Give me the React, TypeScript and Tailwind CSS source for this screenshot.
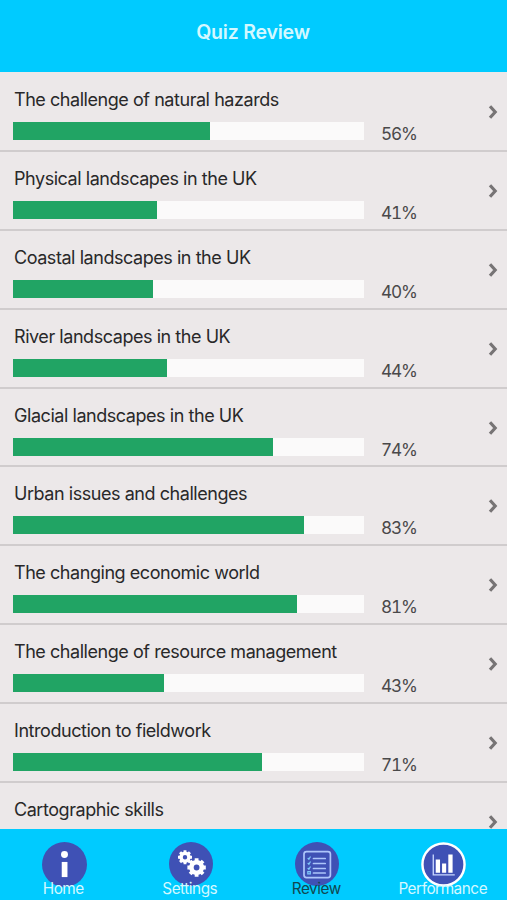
import type { ReactNode } from 'react';

interface Topic {
  title: string;
  score?: number;
}

const topics: Topic[] = [
  { title: 'The challenge of natural hazards', score: 56 },
  { title: 'Physical landscapes in the UK', score: 41 },
  { title: 'Coastal landscapes in the UK', score: 40 },
  { title: 'River landscapes in the UK', score: 44 },
  { title: 'Glacial landscapes in the UK', score: 74 },
  { title: 'Urban issues and challenges', score: 83 },
  { title: 'The changing economic world', score: 81 },
  { title: 'The challenge of resource management', score: 43 },
  { title: 'Introduction to fieldwork', score: 71 },
  { title: 'Cartographic skills' },
];

const InfoIcon = () => (
  <svg viewBox="0 0 44 44" className="size-[45px]">
    <circle cx="22" cy="22" r="22" fill="#3f51b5" />
    <circle cx="22" cy="12.2" r="3.4" fill="#fff" />
    <path d="M19.3 19.5h5.6v14.8h-5.6z" fill="#fff" />
  </svg>
);

// A ring with eight short teeth around it
const Gear = ({ x, y, scale }: { x: number; y: number; scale: number }) => (
  <g transform={`translate(${x} ${y}) scale(${scale})`} stroke="#fff">
    <circle r="5.2" fill="none" strokeWidth="4.6" />
    {[0, 45, 90, 135].map((angle) => (
      <path key={angle} d="M0-9.2v3M0 6.2v3" strokeWidth="3.8" transform={`rotate(${angle})`} />
    ))}
  </g>
);

const GearsIcon = () => (
  <svg viewBox="0 0 44 44" className="size-[44px]">
    <circle cx="22" cy="22" r="22" fill="#3f51b5" />
    <Gear x={16} y={15.2} scale={0.76} />
    <Gear x={27.6} y={25.5} scale={1} />
  </svg>
);

const ListIcon = () => (
  <svg viewBox="0 0 44 44" className="size-[44px]">
    <circle cx="22" cy="22" r="22" fill="#3f51b5" />
    <rect x="9" y="9.6" width="26.4" height="26" rx="2.5" fill="none" stroke="#adc5fa" strokeWidth="1.7" />
    <path d="M18.5 16.5h11.7M18.5 21.5h11.7M18.5 26.5h11.7M18.5 31h11.7" stroke="#adc5fa" strokeWidth="1.7" strokeLinecap="round" />
    <path d="m12.7 16 1.2 1.2 1.6-2.7M12.7 21l1.2 1.2 1.6-2.7M12.7 26l1.2 1.2 1.6-2.7M12.8 29.7h2.5v2.2h-2.5z" fill="none" stroke="#7fc8fa" strokeWidth="1.2" />
  </svg>
);

const ChartIcon = () => (
  <svg viewBox="0 0 44 44" className="size-[45px]">
    <circle cx="22" cy="22" r="20.6" fill="#3f51b5" stroke="#fff" strokeWidth="2.4" />
    <path d="M12 12.2v20h21" fill="none" stroke="#c9d7ff" strokeWidth="1.3" />
    <path d="M14.4 17h4.2v13h-4.2zM20.6 21h4v9h-4zM26.7 12.3h4.2V30h-4.2z" fill="#fff" />
  </svg>
);

const TopicRow = ({ title, score }: Topic) => (
  <li className="relative h-[78.9px] shrink-0 border-b-2 border-[#d0cccd] pl-[13px] pt-[16px]">
    <h2 className="pl-px text-[18px] leading-[22px] tracking-[-0.45px] text-[#292829]">{title}</h2>
    {score !== undefined && (
      <div className="mt-[11px] flex">
        <div className="h-[18px] w-[351px] bg-[#fbfafa]">
          <div className="h-full bg-[#21a464]" style={{ width: `${score}%` }} />
        </div>
        <span className="ml-[17px] mt-[2px] text-[17.2px] leading-[20px] tabular-nums tracking-[-1.2px] text-[#4a494a]">{score}%</span>
      </div>
    )}
    <svg viewBox="0 0 10 16" className="absolute right-[9.5px] top-[31px] h-4 w-2.5">
      <path d="m2 2.2 5.2 5.8L2 13.8" fill="none" stroke="#777475" strokeWidth="3.2" />
    </svg>
  </li>
);

interface TabProps {
  label: string;
  icon: ReactNode;
  active?: boolean;
}

const Tab = ({ label, icon, active }: TabProps) => (
  <button className="flex w-[126.5px] flex-col items-center pt-[13px]">
    <span className="flex h-[45px] items-start">{icon}</span>
    <span className={`relative -mt-[7.5px] mr-[2px] text-[15.3px] leading-[20px] tracking-[-0.45px] ${active ? 'text-[#124750]' : 'text-[#d3f8ff]'}`}>
      {label}
    </span>
  </button>
);

const App = () => {
  return (
    <div className="flex h-screen flex-col overflow-hidden bg-[#ece8e9] font-['Inter',sans-serif]">
      <header className="flex h-[72px] shrink-0 justify-center bg-[#00cbff] pr-px pt-[20px]">
        <h1 className="text-[19.5px] font-semibold leading-[24px] tracking-[-0.2px] text-[#d3f8ff]">Quiz Review</h1>
      </header>

      <ul className="flex min-h-0 flex-1 flex-col overflow-hidden pt-px">
        {topics.map((topic) => (
          <TopicRow key={topic.title} {...topic} />
        ))}
      </ul>

      {/* Bottom tab bar */}
      <nav className="flex h-[71.5px] shrink-0 bg-[#00cbff] pl-px">
        <Tab label="Home" icon={<InfoIcon />} />
        <Tab label="Settings" icon={<GearsIcon />} />
        <Tab label="Review" icon={<ListIcon />} active />
        <Tab label="Performance" icon={<ChartIcon />} />
      </nav>
    </div>
  );
};

export default App;
